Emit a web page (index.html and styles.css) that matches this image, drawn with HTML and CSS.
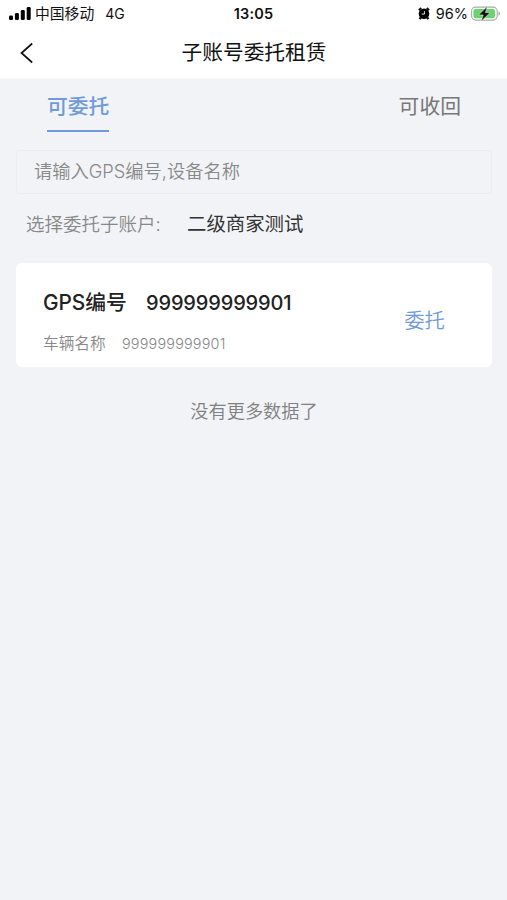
FILE: index.html
```html
<!DOCTYPE html>
<html lang="zh-CN">
<head>
<meta charset="utf-8">
<meta name="viewport" content="width=device-width">
<title>子账号委托租赁</title>
<link rel="stylesheet" href="styles.css">
</head>
<body>
<header class="top">
  <div class="status">
    <div class="status-left">
      <svg class="signal" width="22" height="13" viewBox="0 0 22 13"><rect x="0" y="8.5" width="4" height="4.5" rx="1.3"/><rect x="5.9" y="6" width="4" height="7" rx="1.3"/><rect x="11.8" y="3" width="4" height="10" rx="1.3"/><rect x="17.7" y="0" width="4" height="13" rx="1.3"/></svg>
      <span class="carrier">中国移动</span>
      <span class="network">4G</span>
    </div>
    <div class="clock">13:05</div>
    <div class="status-right">
      <svg class="alarm" width="12" height="13" viewBox="0 0 12 13"><circle cx="6" cy="6.7" r="5.3"/><path d="M1 3.2 3.2 1M8.8 1 11 3.2M2.8 10.3l-1.2 1.8M9.2 10.3l1.2 1.8" fill="none" stroke="#111" stroke-width="2.2"/><path d="M6.4 4.2v2.9H3.7" fill="none" stroke="#fff" stroke-width=".9"/></svg>
      <span class="percent">96%</span>
      <svg class="battery" width="30" height="16" viewBox="0 0 30 16"><rect x=".6" y="1.1" width="25.6" height="13" rx="4" fill="#fff" stroke="#aaa" stroke-width="1.1"/><rect x="2.4" y="2.9" width="21.6" height="9.4" rx="2.3" fill="#69d36d"/><path d="M27.5 5.6c2.1.7 2.1 3.5 0 4.2z" fill="#aaa"/><path d="M16.4.2 7.6 8.9h4.6l-2 6.3 9-8.7h-4.8z" fill="#111" stroke="#fff" stroke-width=".5"/></svg>
    </div>
  </div>
  <nav class="navbar">
    <svg class="back" width="14" height="22" viewBox="0 0 14 22"><path d="M12.2 1.5 1.5 11l10.7 9.5" fill="none" stroke="#111" stroke-width="1.7"/></svg>
    <h1 class="title">子账号委托租赁</h1>
  </nav>
</header>
<main class="content">
  <div class="tabs">
    <div class="tab tab-active">可委托</div>
    <div class="tab">可收回</div>
  </div>
  <div class="search">请输入<span class="search-latin">GPS</span>编号,设备名称</div>
  <div class="account">
    <span class="account-label">选择委托子账户:</span>
    <span class="account-value">二级商家测试</span>
  </div>
  <section class="card">
    <div class="card-info">
      <div class="device"><span class="device-label">GPS编号</span><span class="device-number">999999999901</span></div>
      <div class="vehicle"><span class="vehicle-label">车辆名称</span><span class="vehicle-number">999999999901</span></div>
    </div>
    <div class="entrust">委托</div>
  </section>
  <div class="end">没有更多数据了</div>
</main>
</body>
</html>
```
FILE: styles.css
```css
* { box-sizing: border-box; }
body {
  margin: 0;
  min-height: 900px;
  background: #f1f3f7;
  color: #111;
  font-family: Inter, "Noto Sans CJK SC", sans-serif;
  white-space: nowrap;
}
svg { display: block; flex: none; }
.top { height: 79px; background: #fff; border-bottom: 1px solid #f7f8fa; }
.status {
  display: grid;
  grid-template-columns: 1fr auto 1fr;
  align-items: center;
  height: 27px;
  padding: 0 6px 0 9px;
}
.status-left, .status-right { display: flex; align-items: center; height: 27px; }
.status-right { justify-content: flex-end; }
.carrier { margin-left: 4px; font-size: 14.8px; line-height: 27px; padding-top: 1px; }
.network { margin-left: 11px; font-size: 14px; line-height: 27px; }
.clock { margin-right: 3px; font-size: 14.5px; font-weight: 600; line-height: 27px; letter-spacing: .2px; }
.percent { margin: 0 3px 0 6px; font-size: 14.5px; line-height: 27px; }
.navbar {
  display: grid;
  grid-template-columns: 1fr auto 1fr;
  align-items: center;
  height: 51px;
  padding: 0 19px 0 20px;
}
.title { margin: 0; font-size: 20.7px; font-weight: 400; line-height: 52px; }
.content { padding: 0 15px 0 16px; }
.tabs {
  display: flex;
  justify-content: space-between;
  padding: 0 31px;
}
.tab {
  height: 53px;
  color: #777;
  font-size: 20.8px;
  line-height: 56px;
}
.tab-active { color: #709ada; font-weight: 500; border-bottom: 2px solid #709ada; }
.search {
  height: 44px;
  margin-top: 18px;
  padding-left: 17px;
  border: 1px solid #eaecf0;
  border-radius: 4px;
  color: #888;
  font-size: 18.3px;
  font-weight: 350;
  line-height: 41px;
}
.search-latin { letter-spacing: -.1px; }
.account { display: flex; height: 60px; margin-bottom: 9px; padding-left: 10px; line-height: 60px; }
.account-label { width: 161px; color: #888; font-size: 18.5px; font-weight: 350; }
.account-value { color: #333; font-size: 19.4px; }
.card {
  display: flex;
  justify-content: space-between;
  height: 104px;
  padding: 0 47px 0 27px;
  border-radius: 6px;
  background: #fff;
}
.device { display: flex; height: 53px; padding-top: 13px; color: #222; font-weight: 500; line-height: 54px; }
.device-label { width: 103px; font-size: 20.8px; letter-spacing: -.05px; }
.device-number { font-size: 20px; letter-spacing: -.15px; }
.vehicle { display: flex; height: 51px; color: #888; font-weight: 350; line-height: 56px; }
.vehicle-label { width: 79px; font-size: 15.7px; }
.vehicle-number { font-size: 14.4px; letter-spacing: .2px; }
.entrust { color: #709ada; font-size: 20.4px; font-weight: 350; line-height: 115px; }
.end { margin-top: 29px; color: #808080; font-size: 18.2px; font-weight: 350; line-height: 30px; text-align: center; }
```
